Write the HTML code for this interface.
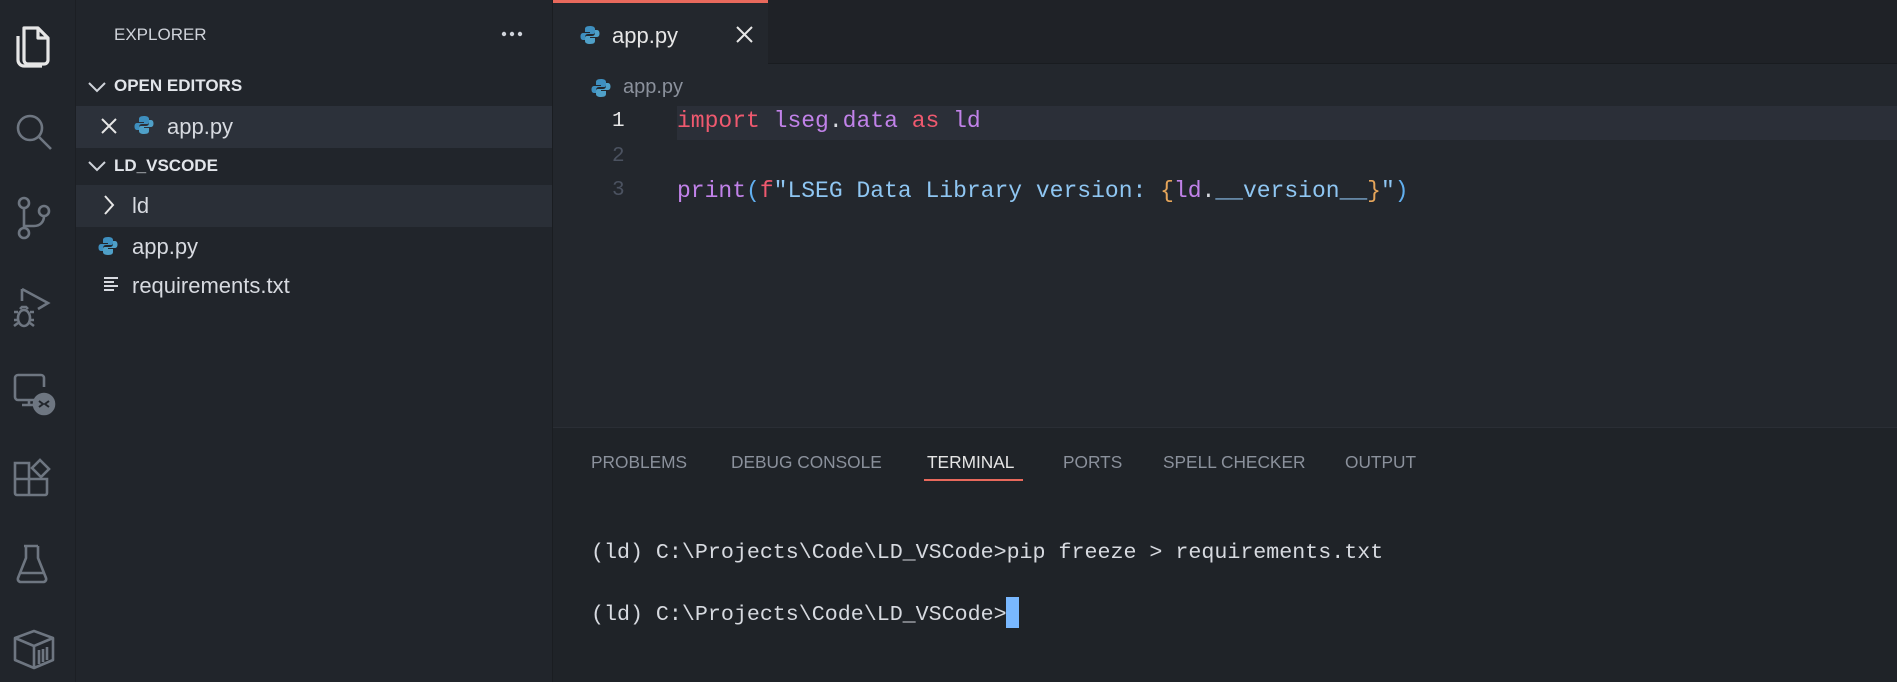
<!DOCTYPE html>
<html><head><meta charset="utf-8"><style>
*{margin:0;padding:0;box-sizing:border-box}
body{width:1897px;height:682px;overflow:hidden;background:#23272d;font-family:"Liberation Sans",sans-serif;position:relative}
.abs{position:absolute}
#act{left:0;top:0;width:76px;height:682px;background:#21252b;border-right:1px solid #1c1f24}
#side{left:76px;top:0;width:477px;height:682px;background:#21252b;border-right:1px solid #1a1d21}
.t{position:absolute;white-space:nowrap;color:#d7dae0}
.row{position:absolute;left:0;width:476px;height:42px}
.mono{font-family:"Liberation Mono",monospace}
.tab{position:absolute;white-space:nowrap;font-size:17.3px;color:#8b919c;top:452px}
</style></head><body>
<div id="act" class="abs">
<svg class="abs" style="left:14px;top:24px" width="40" height="44" viewBox="0 0 40 44" fill="none" stroke="#e6e6e6" stroke-width="3.2" stroke-linejoin="round"><path d="M10 4h14l10 10v22a4 4 0 0 1-4 4H14a4 4 0 0 1-4-4z"/><path d="M24 4v10h10"/><path d="M4 12v24a6 6 0 0 0 6 6h18"/></svg>
<svg class="abs" style="left:14px;top:112px" width="42" height="42" viewBox="0 0 42 42" fill="none" stroke="#6e7681" stroke-width="2.6"><circle cx="16" cy="16" r="12"/><path d="M25 25l12 12"/></svg>
<svg class="abs" style="left:16px;top:196px" width="36" height="44" viewBox="0 0 36 44" fill="none" stroke="#6e7681" stroke-width="2.6"><circle cx="8" cy="7" r="5"/><circle cx="8" cy="37" r="5"/><circle cx="28" cy="15" r="5"/><path d="M8 12v20M28 20c0 6-4 10-10 10H8"/></svg>
<svg class="abs" style="left:10px;top:285px" width="44" height="46" viewBox="0 0 44 46" fill="none" stroke="#6e7681" stroke-width="2.6"><path d="M12 4v12M12 4l26 14-10 6"/><ellipse cx="14" cy="33" rx="6" ry="8"/><path d="M4 27h4M4 35h4M4 41l4-3M20 27h4M20 35h4M24 41l-4-3M10 24l2-2h4l2 2"/></svg>
<svg class="abs" style="left:12px;top:372px" width="44" height="44" viewBox="0 0 44 44" fill="none" stroke="#6e7681" stroke-width="2.6"><path d="M28 28H6a3 3 0 0 1-3-3V6a3 3 0 0 1 3-3h23a3 3 0 0 1 3 3v9"/><path d="M17 28v5M10 33h12"/><circle cx="32" cy="32" r="10" fill="#6e7681"/><path d="M27 35l4-3-4-3M37 29l-4 3 4 3" stroke="#21252b" stroke-width="2"/></svg>
<svg class="abs" style="left:12px;top:458px" width="42" height="42" viewBox="0 0 42 42" fill="none" stroke="#6e7681" stroke-width="2.6"><path d="M3 5h14v32H5a2 2 0 0 1-2-2zM3 21h32v14a2 2 0 0 1-2 2H17M17 21v-4"/><path d="M28 2l9 9-8 8-9-9z"/></svg>
<svg class="abs" style="left:14px;top:543px" width="40" height="42" viewBox="0 0 40 42" fill="none" stroke="#6e7681" stroke-width="2.6" stroke-linejoin="round"><path d="M10 3h14M12 3v12L4 35a3 3 0 0 0 3 4h22a3 3 0 0 0 3-4L24 15V3M7 30h23"/></svg>
<svg class="abs" style="left:12px;top:628px" width="44" height="44" viewBox="0 0 44 44" fill="none" stroke="#6e7681" stroke-width="2.6" stroke-linejoin="round"><path d="M3 10L22 3l19 7v22L22 40 3 32zM3 10l19 8 19-8M22 18v22M27 22v14M31 21v13M35 19v13"/></svg>
</div>
<div id="side" class="abs">
<div class="t" style="left:38px;top:25px;font-size:17px;color:#cfd3da">EXPLORER</div>
<svg class="abs" style="left:425px;top:31px" width="22" height="6" viewBox="0 0 22 6" fill="#cfd3da"><circle cx="3" cy="3" r="2.2"/><circle cx="11" cy="3" r="2.2"/><circle cx="19" cy="3" r="2.2"/></svg>
<svg class="abs" style="left:11px;top:80px" width="20" height="14" viewBox="0 0 20 14" fill="none" stroke="#cfd3da" stroke-width="2"><path d="M2 3l8 8 8-8"/></svg>
<div class="t" style="left:38px;top:76px;font-size:17px;font-weight:bold;color:#e2e5ea">OPEN EDITORS</div>
<div class="row" style="top:106px;background:#2c313a"></div>
<svg class="abs" style="left:24px;top:117px" width="18" height="18" viewBox="0 0 18 18" stroke="#e6e6e6" stroke-width="2"><path d="M2 2l14 14M16 2L2 16"/></svg>
<svg class="abs" style="left:58px;top:115px" width="20" height="20" viewBox="0 0 20 20"><path d="M10 1c-4 0-5 1.5-5 3v3h5v1H3c-2 0-2.5 2-2.5 3.5S1 15 3 15h2v-3c0-1.5 1-3 3-3h5c1.5 0 2-.8 2-2V4c0-2-2-3-5-3z" fill="#3e8fbf"/><path d="M10 19c4 0 5-1.5 5-3v-3h-5v-1h7c2 0 2.5-2 2.5-3.5S19 5 17 5h-2v3c0 1.5-1 3-3 3H7c-1.5 0-2 .8-2 2v3c0 2 2 3 5 3z" fill="#4fa0c8"/></svg>
<div class="t" style="left:91px;top:114px;font-size:22px">app.py</div>
<svg class="abs" style="left:11px;top:159px" width="20" height="14" viewBox="0 0 20 14" fill="none" stroke="#cfd3da" stroke-width="2"><path d="M2 3l8 8 8-8"/></svg>
<div class="t" style="left:38px;top:156px;font-size:17px;font-weight:bold;color:#e2e5ea">LD_VSCODE</div>
<div class="row" style="top:185px;background:#2a2f37"></div>
<svg class="abs" style="left:27px;top:194px" width="12" height="22" viewBox="0 0 12 22" fill="none" stroke="#e6e6e6" stroke-width="2"><path d="M2 2l8 9-8 9"/></svg>
<div class="t" style="left:56px;top:193px;font-size:22px">ld</div>
<svg class="abs" style="left:22px;top:236px" width="20" height="20" viewBox="0 0 20 20"><path d="M10 1c-4 0-5 1.5-5 3v3h5v1H3c-2 0-2.5 2-2.5 3.5S1 15 3 15h2v-3c0-1.5 1-3 3-3h5c1.5 0 2-.8 2-2V4c0-2-2-3-5-3z" fill="#3e8fbf"/><path d="M10 19c4 0 5-1.5 5-3v-3h-5v-1h7c2 0 2.5-2 2.5-3.5S19 5 17 5h-2v3c0 1.5-1 3-3 3H7c-1.5 0-2 .8-2 2v3c0 2 2 3 5 3z" fill="#4fa0c8"/></svg>
<div class="t" style="left:56px;top:234px;font-size:22px">app.py</div>
<svg class="abs" style="left:28px;top:276px" width="16" height="16" viewBox="0 0 16 16" stroke="#d7dae0" stroke-width="2"><path d="M0 2h14M0 6h10M0 10h14M0 14h10"/></svg>
<div class="t" style="left:56px;top:273px;font-size:22px">requirements.txt</div>
</div>
<div class="abs" style="left:553px;top:0;width:1344px;height:64px;background:#1f2227;border-bottom:1px solid #191c20"></div>
<div class="abs" style="left:553px;top:0;width:215px;height:65px;background:#23272d;border-top:3px solid #e8695c"></div>
<svg class="abs" style="left:580px;top:25px" width="20" height="20" viewBox="0 0 20 20"><path d="M10 1c-4 0-5 1.5-5 3v3h5v1H3c-2 0-2.5 2-2.5 3.5S1 15 3 15h2v-3c0-1.5 1-3 3-3h5c1.5 0 2-.8 2-2V4c0-2-2-3-5-3z" fill="#3e8fbf"/><path d="M10 19c4 0 5-1.5 5-3v-3h-5v-1h7c2 0 2.5-2 2.5-3.5S19 5 17 5h-2v3c0 1.5-1 3-3 3H7c-1.5 0-2 .8-2 2v3c0 2 2 3 5 3z" fill="#4fa0c8"/></svg>
<div class="t" style="left:612px;top:23px;font-size:22px;color:#e6e6e6">app.py</div>
<svg class="abs" style="left:736px;top:26px" width="17" height="17" viewBox="0 0 17 17" stroke="#e6e6e6" stroke-width="2"><path d="M1 1l15 15M16 1L1 16"/></svg>
<svg class="abs" style="left:591px;top:78px" width="20" height="20" viewBox="0 0 20 20"><path d="M10 1c-4 0-5 1.5-5 3v3h5v1H3c-2 0-2.5 2-2.5 3.5S1 15 3 15h2v-3c0-1.5 1-3 3-3h5c1.5 0 2-.8 2-2V4c0-2-2-3-5-3z" fill="#3e8fbf"/><path d="M10 19c4 0 5-1.5 5-3v-3h-5v-1h7c2 0 2.5-2 2.5-3.5S19 5 17 5h-2v3c0 1.5-1 3-3 3H7c-1.5 0-2 .8-2 2v3c0 2 2 3 5 3z" fill="#4fa0c8"/></svg>
<div class="t" style="left:623px;top:76px;font-size:20px;color:#8b919c">app.py</div>
<div class="abs" style="left:677px;top:106px;width:1220px;height:34px;background:#2b2f38"></div>
<div class="t mono" style="left:612px;top:110px;font-size:21px;color:#e6e6e6">1</div>
<div class="t mono" style="left:612px;top:145px;font-size:21px;color:#4b5260">2</div>
<div class="t mono" style="left:612px;top:179px;font-size:21px;color:#4b5260">3</div>
<div class="t mono" style="left:677px;top:108px;font-size:23px"><span style="color:#ef596f">import</span> <span style="color:#c182e9">lseg</span><span style="color:#d7dae0">.</span><span style="color:#c182e9">data</span> <span style="color:#ef596f">as</span> <span style="color:#c182e9">ld</span></div>
<div class="t mono" style="left:677px;top:178px;font-size:23px"><span style="color:#c182e9">print</span><span style="color:#61afef">(</span><span style="color:#ef596f">f</span><span style="color:#8fc6f2">"LSEG Data Library version: </span><span style="color:#e5a55a">{</span><span style="color:#c182e9">ld</span><span style="color:#d7dae0">.</span><span style="color:#8fc6f2">__version__</span><span style="color:#e5a55a">}</span><span style="color:#8fc6f2">"</span><span style="color:#61afef">)</span></div>
<div class="abs" style="left:553px;top:427px;width:1344px;height:255px;background:#1f2328;border-top:1px solid #2a2e35"></div>
<div class="tab" style="left:591px">PROBLEMS</div>
<div class="tab" style="left:731px">DEBUG CONSOLE</div>
<div class="tab" style="left:927px;color:#e6e6e6">TERMINAL</div>
<div class="abs" style="left:924px;top:479px;width:99px;height:2px;background:#e8695c"></div>
<div class="tab" style="left:1063px">PORTS</div>
<div class="tab" style="left:1163px">SPELL CHECKER</div>
<div class="tab" style="left:1345px">OUTPUT</div>
<div class="t mono" style="left:591px;top:540px;font-size:21.65px;color:#d7dae0">(ld) C:\Projects\Code\LD_VSCode&gt;pip freeze &gt; requirements.txt</div>
<div class="t mono" style="left:591px;top:602px;font-size:21.65px;color:#d7dae0">(ld) C:\Projects\Code\LD_VSCode&gt;</div>
<div class="abs" style="left:1006px;top:597px;width:13px;height:31px;background:#79b8ff"></div>
</body></html>
